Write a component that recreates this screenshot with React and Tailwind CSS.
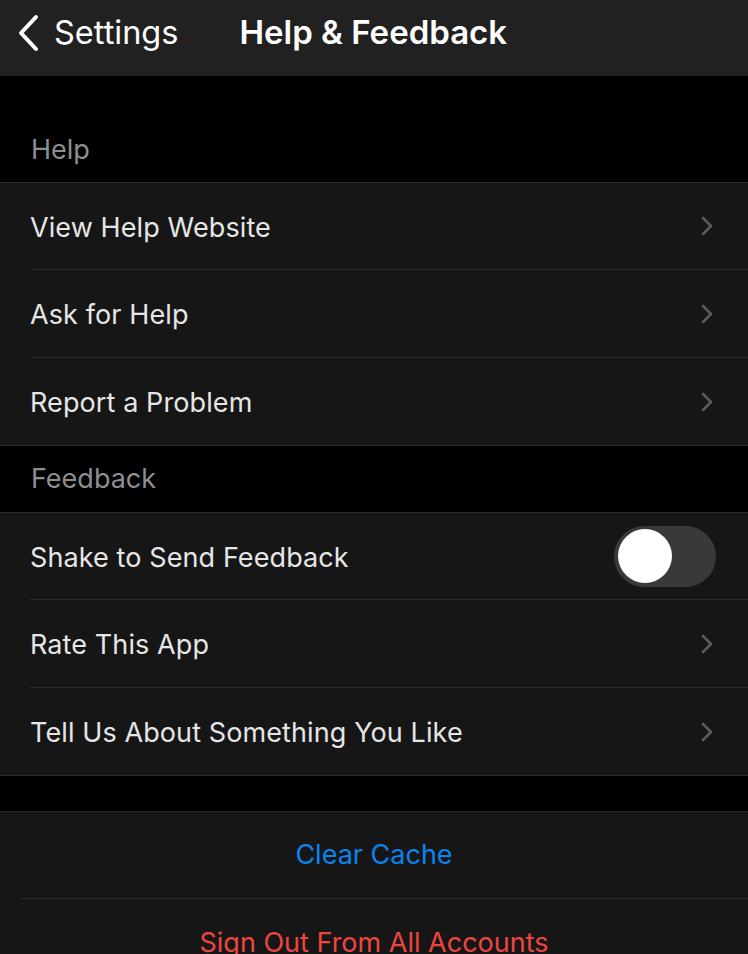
import React from "react";

const Chevron = () => (
  <svg width="14" height="22" viewBox="0 0 14 22" fill="none">
    <path d="M3 3l8 8-8 8" stroke="#5b5b5f" strokeWidth="2.6" strokeLinecap="round" strokeLinejoin="round" />
  </svg>
);

function Row({ label, last, right, h = "h-[88px]" }) {
  return (
    <div className={`flex ${h} items-stretch bg-[#161616]`}>
      <div className={`ml-[30px] flex flex-1 items-center justify-between pr-[34px] ${last ? "" : "border-b border-[#2c2c2c]"}`}>
        <span className="pt-[4px] text-[27px] tracking-[0.1px] text-[#e6e6e6]">{label}</span>
        {right ?? <Chevron />}
      </div>
    </div>
  );
}

function Toggle() {
  return (
    <div className="-mr-[2px] flex h-[61px] w-[102px] items-center rounded-full bg-[#39393c] px-[4px]">
      <div className="h-[54px] w-[54px] rounded-full bg-white" />
    </div>
  );
}

export default function App() {
  return (
    <div className="h-[954px] w-[748px] overflow-hidden bg-black" style={{ fontFamily: "Inter, 'Noto Sans', sans-serif" }}>
      <div className="flex h-[76px] items-center bg-[#212121] pb-[10px]">
        <div className="ml-[15px] flex items-center">
          <svg width="26" height="40" viewBox="0 0 26 40" fill="none">
            <path d="M21 4L6 20l15 16" stroke="#ffffff" strokeWidth="4" strokeLinecap="round" strokeLinejoin="round" />
          </svg>
          <span className="ml-[13px] text-[32.5px] text-white">Settings</span>
        </div>
        <span className="ml-[61px] text-[33px] font-semibold text-white">Help &amp; Feedback</span>
      </div>
      <div className="h-[38px]" />
      <div className="flex h-[69px] items-center border-b border-[#2c2c2c] px-[31px] pt-[4px] text-[27px] text-[#8e8e92]">Help</div>
      <Row label="View Help Website" h="h-[87px]" />
      <Row label="Ask for Help" />
      <Row label="Report a Problem" h="h-[87px]" last />
      <div className="flex h-[68px] items-center border-y border-[#2c2c2c] px-[31px] text-[27px] text-[#8e8e92]">Feedback</div>
      <Row label="Shake to Send Feedback" h="h-[87px]" right={<Toggle />} />
      <Row label="Rate This App" />
      <Row label="Tell Us About Something You Like" h="h-[87px]" last />
      <div className="h-[37px] border-y border-[#2c2c2c]" />
      <div className="flex h-[87px] items-stretch bg-[#161616]">
        <div className="ml-[21px] flex flex-1 items-center justify-center border-b border-[#2c2c2c] pr-[21px] text-[27px] text-[#0a84f0]">Clear Cache</div>
      </div>
      <div className="flex h-[88px] items-center justify-center bg-[#161616] text-[27px] text-[#ee4540]">Sign Out From All Accounts</div>
    </div>
  );
}
